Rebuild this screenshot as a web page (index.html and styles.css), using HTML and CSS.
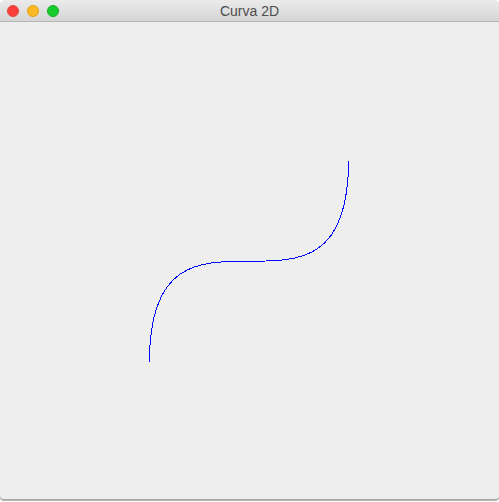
FILE: index.html
```html
<!DOCTYPE html>
<html>
<head>
<meta charset="utf-8">
<title>Curva 2D</title>
<link rel="stylesheet" href="styles.css">
</head>
<body>
<div class="window">
  <div class="titlebar">
    <div class="lights">
      <span class="light red"></span>
      <span class="light yellow"></span>
      <span class="light green"></span>
    </div>
    <div class="title">Curva 2D</div>
  </div>
  <div class="content">
    <svg class="canvas" width="499" height="477" viewBox="0 22 499 477">
      <path d="M149.5 361.5 C149.5 161 348.5 361.5 348.5 161" fill="none" stroke="#0000ff" stroke-width="1" shape-rendering="crispEdges"/>
    </svg>
  </div>
</div>
</body>
</html>
```
FILE: styles.css
```css
html, body {
  margin: 0;
  padding: 0;
  background: #ffffff;
  width: 499px;
  height: 502px;
  overflow: hidden;
}
.window {
  width: 499px;
  height: 499px;
  border-radius: 5px 5px 4px 4px;
  overflow: hidden;
  background: #eeeeee;
  border-bottom: 1px solid #a6a6a6;
  box-shadow: 0 1px 1px rgba(0,0,0,0.3);
  display: flex;
  flex-direction: column;
}
.titlebar {
  height: 21px;
  border-bottom: 1px solid #b5b5b5;
  background: linear-gradient(#ebebeb, #d5d5d5);
  display: flex;
  align-items: center;
  position: relative;
  flex: none;
}
.lights {
  display: flex;
  gap: 8px;
  padding-left: 7px;
  padding-top: 1px;
}
.light {
  width: 12px;
  height: 12px;
  border-radius: 50%;
  box-sizing: border-box;
}
.red { background: #fc3f3b; border: 1px solid #e2463f; }
.yellow { background: #fdb825; border: 1px solid #e1a116; }
.green { background: #16cc2d; border: 1px solid #14ae1d; }
.title {
  position: absolute;
  left: 0;
  right: 0;
  top: 3px;
  text-align: center;
  font-family: "Liberation Sans", Arial, sans-serif;
  font-size: 14px;
  color: #4d4d4d;
  line-height: 16px;
}
.content {
  flex: 1;
  position: relative;
}
.canvas {
  display: block;
}
```
